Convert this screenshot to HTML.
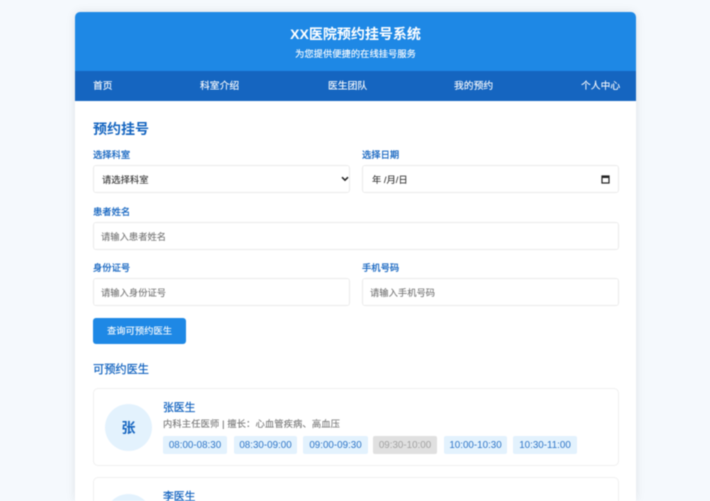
<!DOCTYPE html>
<html lang="zh-CN">
<head>
<meta charset="utf-8">
<title>XX医院预约挂号系统</title>
<style>
html,body{margin:0;padding:0;width:710px;height:501px;overflow:hidden;background:#f5f9fd;}
body{font-family:"Liberation Sans","Noto Sans CJK SC",sans-serif;}
#wrap{position:absolute;left:0;top:0;width:710px;height:501px;overflow:hidden;filter:blur(.45px);}
.a{position:absolute;white-space:nowrap;}
#card{position:absolute;left:75px;top:12px;width:561px;height:489px;background:#fff;border-radius:5px 5px 0 0;box-shadow:0 0 10px rgba(0,0,0,.09);}
#hd{position:absolute;left:75px;top:12px;width:561px;height:59px;background:#1e88e5;border-radius:5px 5px 0 0;}
#nav{position:absolute;left:75px;top:71px;width:561px;height:30px;background:#1565c0;}
.nav{color:#fff;font-size:9.8px;line-height:30px;top:72px;-webkit-text-stroke:.1px #fff;}
.lb{color:#1565c0;font-size:9.3px;line-height:14px;-webkit-text-stroke:.25px #1565c0;}
.in{position:absolute;box-sizing:border-box;height:28px;background:#fff;border:1px solid #ebebeb;border-radius:3px;color:#333;font-size:9.3px;line-height:28px;padding-left:7px;white-space:nowrap;-webkit-text-stroke:.1px #333;}
.ph{color:#757575;-webkit-text-stroke:.1px #757575;}
.dc{position:absolute;left:93px;width:526px;box-sizing:border-box;height:78px;border:1px solid #f0f0f0;border-radius:5px;background:#fff;}
.av{position:absolute;left:105px;width:47px;height:47px;border-radius:50%;background:#e3f2fd;color:#1565c0;font-size:14px;font-weight:700;text-align:center;line-height:49px;}
.sl{position:absolute;top:436px;height:18px;line-height:20px;background:#e3f2fd;color:#2f76c8;font-size:9.8px;text-align:center;border-radius:2px;white-space:nowrap;}
.off{background:#e0e0e0;color:#a3a3a3;}
</style>
</head>
<body>
<div id="wrap">
<div id="card"></div>
<div id="hd"></div>
<div id="nav"></div>

<div class="a" style="left:75px;width:561px;top:24px;text-align:center;color:#fff;font-size:14px;line-height:20px;font-weight:700;">XX医院预约挂号系统</div>
<div class="a" style="left:75px;width:561px;top:47px;text-align:center;color:#fff;font-size:9.3px;line-height:14px;-webkit-text-stroke:.1px #fff;">为您提供便捷的在线挂号服务</div>

<div class="a nav" style="left:93px;">首页</div>
<div class="a nav" style="left:200px;">科室介绍</div>
<div class="a nav" style="left:328px;">医生团队</div>
<div class="a nav" style="left:454px;">我的预约</div>
<div class="a nav" style="left:581px;">个人中心</div>

<div class="a" style="left:93px;top:119px;color:#1565c0;font-size:14px;line-height:20px;font-weight:700;">预约挂号</div>

<div class="a lb" style="left:93px;top:148px;">选择科室</div>
<div class="in" style="left:93px;top:165px;width:257px;padding-left:8px;">请选择科室
  <svg style="position:absolute;left:247px;top:10px;" width="8" height="6" viewBox="0 0 8 6"><path d="M1 1.2L4 4.2L7 1.2" fill="none" stroke="#222" stroke-width="1.5"/></svg>
</div>

<div class="a lb" style="left:362px;top:148px;">选择日期</div>
<div class="in" style="left:362px;top:165px;width:257px;padding-left:9px;">年 /月/日
  <svg style="position:absolute;left:238px;top:9px;" width="9" height="9" viewBox="0 0 9 9"><rect x="1" y="1" width="7" height="7" fill="none" stroke="#222" stroke-width="1.2"/><rect x="1" y="1" width="7" height="2" fill="#222"/></svg>
</div>

<div class="a lb" style="left:93px;top:205px;">患者姓名</div>
<div class="in ph" style="left:93px;top:222px;width:526px;">请输入患者姓名</div>

<div class="a lb" style="left:93px;top:261px;">身份证号</div>
<div class="in ph" style="left:93px;top:278px;width:257px;">请输入身份证号</div>

<div class="a lb" style="left:362px;top:261px;">手机号码</div>
<div class="in ph" style="left:362px;top:278px;width:257px;">请输入手机号码</div>

<div class="a" style="left:93px;top:318px;width:93px;height:26px;background:#1e88e5;border-radius:3px;color:#fff;font-size:9.3px;line-height:26px;text-align:center;-webkit-text-stroke:.1px #fff;">查询可预约医生</div>

<div class="a" style="left:93px;top:362px;color:#1565c0;font-size:11.2px;line-height:16px;-webkit-text-stroke:.25px #1565c0;">可预约医生</div>

<div class="dc" style="top:388px;"></div>
<div class="av" style="top:404px;">张</div>
<div class="a" style="left:163px;top:401px;color:#1565c0;font-size:10.8px;line-height:15px;-webkit-text-stroke:.25px #1565c0;">张医生</div>
<div class="a" style="left:163px;top:417px;color:#757575;font-size:9.3px;line-height:14px;letter-spacing:.1px;-webkit-text-stroke:.1px #757575;">内科主任医师 | 擅长：心血管疾病、高血压</div>
<div class="sl" style="left:163px;width:64px;">08:00-08:30</div>
<div class="sl" style="left:234px;width:63px;">08:30-09:00</div>
<div class="sl" style="left:303px;width:65px;">09:00-09:30</div>
<div class="sl off" style="left:373px;width:64px;">09:30-10:00</div>
<div class="sl" style="left:444px;width:63px;">10:00-10:30</div>
<div class="sl" style="left:513px;width:64px;">10:30-11:00</div>

<div class="dc" style="top:477px;height:24px;border-bottom:0;border-radius:5px 5px 0 0;"></div>
<div class="a" style="left:105px;top:494px;width:47px;height:7px;overflow:hidden;"><div style="width:47px;height:47px;border-radius:50%;background:#e3f2fd;"></div></div>
<div class="a" style="left:163px;top:490px;height:11px;overflow:hidden;color:#1565c0;font-size:10.8px;line-height:15px;-webkit-text-stroke:.25px #1565c0;">李医生</div>
</div>
</body>
</html>
